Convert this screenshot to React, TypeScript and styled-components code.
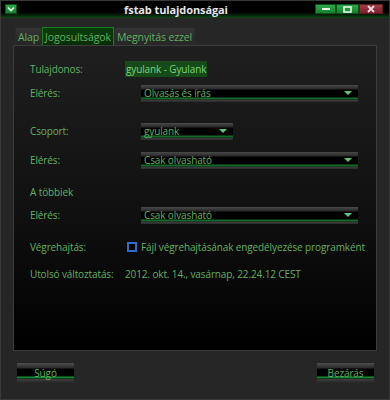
import React, { FC } from 'react';
import styled, { createGlobalStyle } from 'styled-components';

const GREEN_TEXT = '#62b062';
const FONT = "'Open Sans', 'DejaVu Sans', sans-serif";

const GlobalStyle = createGlobalStyle`
  html, body {
    margin: 0;
    padding: 0;
    background: #1c1c1c;
  }
  body {
    font-family: ${FONT};
    font-size: 10px;
    letter-spacing: -0.12px;
  }
`;

const Window = styled.div`
  width: 390px;
  height: 400px;
  box-sizing: border-box;
  display: flex;
  flex-direction: column;
  background: #262626;
  border: 1px solid #3a3a3a;
  overflow: hidden;
`;

const TitleBar = styled.div`
  height: 16px;
  display: flex;
  align-items: center;
  padding: 0 4px;
  background: linear-gradient(to bottom, #000 0%, #000 70%, #0c3a12 100%);
  border-bottom: 1px solid #123f18;
`;

const TitleText = styled.div`
  flex: 1;
  text-align: center;
  color: #e6e6e6;
  font-weight: 700;
  font-size: 11px;
  letter-spacing: -0.1px;
  padding-left: 20px;
`;

const WinButton = styled.div<{ $tone: 'green' | 'red'; $w: number }>`
  width: ${(p) => p.$w}px;
  height: 10px;
  display: flex;
  align-items: center;
  justify-content: center;
  border: 1px solid ${(p) => (p.$tone === 'red' ? '#5a1a22' : '#0b4f1c')};
  background: ${(p) =>
    p.$tone === 'red'
      ? 'linear-gradient(to bottom, #a83a48, #7c1f2c)'
      : 'linear-gradient(to bottom, #2da84a, #17802f)'};
  box-sizing: border-box;
`;

const WinButtons = styled.div`
  display: flex;
  margin-right: 2px;
`;

const Body = styled.div`
  flex: 1;
  display: flex;
  flex-direction: column;
  padding: 9px 12px 0 12px;
`;

const TabBar = styled.div`
  display: flex;
  height: 18px;
  margin-left: 2px;
`;

const Tab = styled.div<{ $active?: boolean }>`
  padding: 0 2px;
  display: flex;
  align-items: center;
  color: ${GREEN_TEXT};
  font-size: 10.5px;
  box-sizing: border-box;
  background: ${(p) =>
    p.$active ? 'linear-gradient(to bottom, #0b3d0b, #072d07)' : 'linear-gradient(to bottom, #343434, #262626)'};
  border: 1px solid ${(p) => (p.$active ? '#1c7a22' : '#2a2a2a')};
  border-bottom: none;
`;

const Panel = styled.div`
  height: 306px;
  box-sizing: border-box;
  background: linear-gradient(to bottom, #1f1f1f 0%, #101010 55%, #000 100%);
  border: 1px solid #3c3c3c;
  padding: 14px 18px 0 16px;
  display: flex;
  flex-direction: column;
`;

const Row = styled.div<{ $top?: number }>`
  display: grid;
  grid-template-columns: 95px 1fr;
  align-items: center;
  height: 18px;
  margin-top: ${(p) => p.$top ?? 0}px;
`;

const Label = styled.div`
  color: ${GREEN_TEXT};
  white-space: nowrap;
`;

const Value = styled.div`
  color: ${GREEN_TEXT};
  white-space: nowrap;
`;

const Owner = styled.span`
  background: #164a18;
  color: #7fd27f;
  padding: 1px 1px;
`;

const Combo = styled.div<{ $width?: number }>`
  margin-left: 16px;
  height: 17px;
  width: ${(p) => (p.$width ? `${p.$width}px` : 'auto')};
  box-sizing: border-box;
  display: flex;
  align-items: center;
  justify-content: space-between;
  padding: 0 6px 1px 3px;
  color: ${GREEN_TEXT};
  background: linear-gradient(
    to bottom,
    #4a4a4a 0%,
    #2e2e2e 20%,
    #000 32%,
    #000 70%,
    #157a2c 78%,
    #0c3a16 84%,
    #3e3e3e 88%,
    #2a2a2a 100%
  );
`;

const Arrow = styled.span`
  width: 0;
  height: 0;
  border-left: 4px solid transparent;
  border-right: 4px solid transparent;
  border-top: 4px solid #5fc67a;
`;

const CheckWrap = styled.div`
  display: flex;
  align-items: center;
  gap: 4px;
  color: ${GREEN_TEXT};
  margin-left: 2px;
  white-space: nowrap;
`;

const CheckBox = styled.span`
  width: 10px;
  height: 10px;
  box-sizing: border-box;
  border: 2px solid #2d6fc8;
  background: #000;
`;

const Footer = styled.div`
  display: flex;
  justify-content: space-between;
  padding: 12px 3px 0 4px;
`;

const Button = styled.div`
  width: 57px;
  height: 20px;
  display: flex;
  align-items: center;
  justify-content: center;
  color: ${GREEN_TEXT};
  background: linear-gradient(
    to bottom,
    #4e4e4e 0%,
    #2a2a2a 25%,
    #000 30%,
    #000 62%,
    #1a8a36 72%,
    #0a3a14 78%,
    #3c3c3c 82%,
    #262626 100%
  );
`;

const ChevronDown: FC = () => (
  <svg width="8" height="6" viewBox="0 0 8 6">
    <path d="M1 1.5 L4 4.5 L7 1.5" stroke="#e8f5e8" strokeWidth="1.6" fill="none" />
  </svg>
);

const App: FC = () => (
  <>
    <GlobalStyle />
    <Window>
      <TitleBar>
        <WinButton $tone="green" $w={12}>
          <ChevronDown />
        </WinButton>
        <TitleText>fstab tulajdonságai</TitleText>
        <WinButtons>
          <WinButton $tone="green" $w={21}>
            <svg width="8" height="3">
              <rect x="0" y="0" width="8" height="2" fill="#e8f5e8" />
            </svg>
          </WinButton>
          <WinButton $tone="green" $w={23}>
            <svg width="9" height="7">
              <rect x="1" y="1" width="7" height="5" stroke="#e8f5e8" strokeWidth="1.6" fill="none" />
            </svg>
          </WinButton>
          <WinButton $tone="red" $w={24}>
            <svg width="8" height="8">
              <path d="M1 1 L7 7 M7 1 L1 7" stroke="#f3dde0" strokeWidth="1.8" />
            </svg>
          </WinButton>
        </WinButtons>
      </TitleBar>
      <Body>
        <TabBar>
          <Tab>Alap</Tab>
          <Tab $active>Jogosultságok</Tab>
          <Tab>Megnyitás ezzel</Tab>
        </TabBar>
        <Panel>
          <Row>
            <Label>Tulajdonos:</Label>
            <Value>
              <Owner>gyulank - Gyulank</Owner>
            </Value>
          </Row>
          <Row $top={6}>
            <Label>Elérés:</Label>
            <Combo>
              <span>Olvasás és írás</span>
              <Arrow />
            </Combo>
          </Row>
          <Row $top={20}>
            <Label>Csoport:</Label>
            <Combo $width={92}>
              <span>gyulank</span>
              <Arrow />
            </Combo>
          </Row>
          <Row $top={11}>
            <Label>Elérés:</Label>
            <Combo>
              <span>Csak olvasható</span>
              <Arrow />
            </Combo>
          </Row>
          <Row $top={14}>
            <Label>A többiek</Label>
            <span />
          </Row>
          <Row $top={5}>
            <Label>Elérés:</Label>
            <Combo>
              <span>Csak olvasható</span>
              <Arrow />
            </Combo>
          </Row>
          <Row $top={14}>
            <Label>Végrehajtás:</Label>
            <CheckWrap>
              <CheckBox />
              <span>Fájl végrehajtásának engedélyezése programként</span>
            </CheckWrap>
          </Row>
          <Row $top={9}>
            <Label>Utolsó változtatás:</Label>
            <Value>2012. okt. 14., vasárnap, 22.24.12 CEST</Value>
          </Row>
        </Panel>
        <Footer>
          <Button>Súgó</Button>
          <Button>Bezárás</Button>
        </Footer>
      </Body>
    </Window>
  </>
);

export default App;
